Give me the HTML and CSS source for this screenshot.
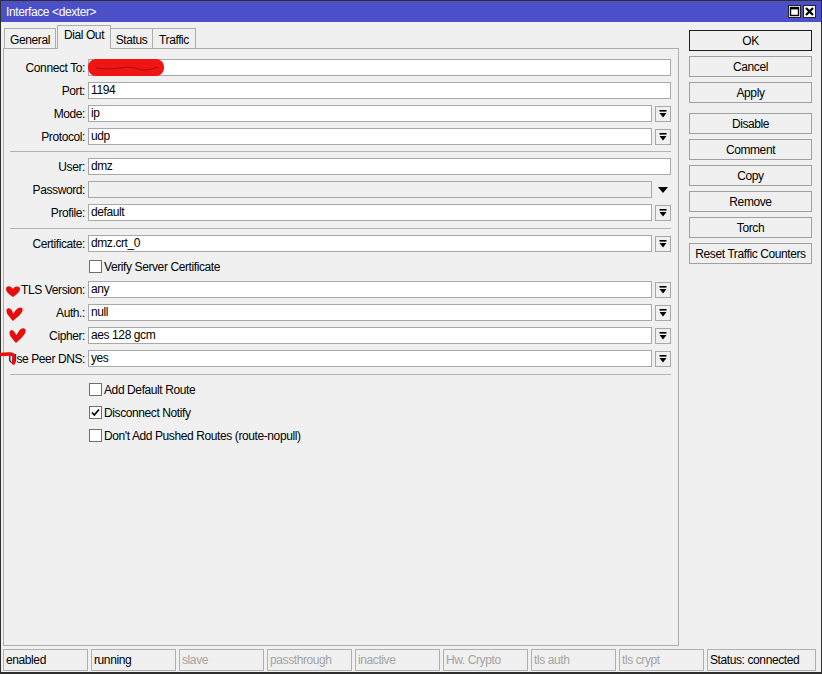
FILE: index.html
```html
<!DOCTYPE html>
<html lang="en">
<head>
    <meta charset="UTF-8">
    <title>Interface &lt;dexter&gt;</title>
    <link rel="stylesheet" href="styles.css">
</head>
<body>
    <div class="window">
        <div class="titlebar">
            <span class="title">Interface &lt;dexter&gt;</span>
            <div class="title-buttons">
                <span class="tbtn">
                    <svg width="11" height="11" viewBox="0 0 11 11"><rect x="1.5" y="1.5" width="8" height="8" fill="none" stroke="#000" stroke-width="1.4"/><rect x="1" y="1" width="9" height="2.4" fill="#000"/></svg>
                </span>
                <span class="tbtn">
                    <svg width="11" height="11" viewBox="0 0 11 11"><path d="M2 2 L9 9 M9 2 L2 9" stroke="#000" stroke-width="2.2"/></svg>
                </span>
            </div>
        </div>

        <div class="main">
            <div class="editor">
                <div class="tabs">
                    <div class="tab tab-general">General</div>
                    <div class="tab tab-active">Dial Out</div>
                    <div class="tab tab-status">Status</div>
                    <div class="tab tab-traffic">Traffic</div>
                </div>

                <div class="panel">
                    <div class="row">
                        <label>Connect To:</label>
                        <div class="field field-marked">
                            <span class="redact">
                                <svg width="76" height="17" viewBox="0 0 76 17"><path d="M8 9 Q20 11 32 9 T50 10 T70 8" fill="none" stroke="#8a1010" stroke-width="0.8"/></svg>
                            </span>
                        </div>
                    </div>
                    <div class="row">
                        <label>Port:</label>
                        <div class="field">1194</div>
                    </div>
                    <div class="row">
                        <label>Mode:</label>
                        <div class="field">ip</div>
                        <span class="drop"><svg width="8" height="8" viewBox="0 0 8 8"><rect x="0.5" y="0" width="7" height="1.6" fill="#000"/><polygon points="0.5,3 7.5,3 4,7.5" fill="#000"/></svg></span>
                    </div>
                    <div class="row">
                        <label>Protocol:</label>
                        <div class="field">udp</div>
                        <span class="drop"><svg width="8" height="8" viewBox="0 0 8 8"><rect x="0.5" y="0" width="7" height="1.6" fill="#000"/><polygon points="0.5,3 7.5,3 4,7.5" fill="#000"/></svg></span>
                    </div>

                    <div class="separator"></div>

                    <div class="row">
                        <label>User:</label>
                        <div class="field">dmz</div>
                    </div>
                    <div class="row">
                        <label>Password:</label>
                        <div class="field field-disabled"></div>
                        <span class="drop drop-plain"><svg width="10" height="6" viewBox="0 0 10 6"><polygon points="0,0 10,0 5,6" fill="#000"/></svg></span>
                    </div>
                    <div class="row">
                        <label>Profile:</label>
                        <div class="field">default</div>
                        <span class="drop"><svg width="8" height="8" viewBox="0 0 8 8"><rect x="0.5" y="0" width="7" height="1.6" fill="#000"/><polygon points="0.5,3 7.5,3 4,7.5" fill="#000"/></svg></span>
                    </div>

                    <div class="separator separator-low"></div>

                    <div class="row">
                        <label>Certificate:</label>
                        <div class="field">dmz.crt_0</div>
                        <span class="drop"><svg width="8" height="8" viewBox="0 0 8 8"><rect x="0.5" y="0" width="7" height="1.6" fill="#000"/><polygon points="0.5,3 7.5,3 4,7.5" fill="#000"/></svg></span>
                    </div>
                    <div class="row check-row">
                        <span class="checkbox"></span>
                        <span>Verify Server Certificate</span>
                    </div>
                    <div class="row">
                        <svg class="scribble scribble-tls" width="14" height="11" viewBox="0 0 14 11"><path d="M7 11 C3 8 0 6 0 3 C0 0.5 2.5 0 4 0.6 C5.5 1.2 6.5 2.2 7 3 C7.5 2 8.5 1 10 0.6 C11.5 0.2 14 0.6 14 3 C14 6 11 8 7 11Z" fill="#e80c0c"/></svg>
                        <label>TLS Version:</label>
                        <div class="field">any</div>
                        <span class="drop"><svg width="8" height="8" viewBox="0 0 8 8"><rect x="0.5" y="0" width="7" height="1.6" fill="#000"/><polygon points="0.5,3 7.5,3 4,7.5" fill="#000"/></svg></span>
                    </div>
                    <div class="row">
                        <svg class="scribble scribble-auth" width="17" height="14" viewBox="0 0 17 14"><path d="M7 14 C4 10 0 7 0.5 3 C1 0.5 4 0.5 5.5 3 C6.5 4.5 7 6 7.5 6.5 C9 4 11 1 14 0.5 C16.5 0.2 17.5 2.5 16 5 C14 8.5 10 11 7 14Z" fill="#e80c0c"/></svg>
                        <label>Auth.:</label>
                        <div class="field">null</div>
                        <span class="drop"><svg width="8" height="8" viewBox="0 0 8 8"><rect x="0.5" y="0" width="7" height="1.6" fill="#000"/><polygon points="0.5,3 7.5,3 4,7.5" fill="#000"/></svg></span>
                    </div>
                    <div class="row">
                        <svg class="scribble scribble-cipher" width="17" height="15" viewBox="0 0 17 15"><path d="M7 15 C4 11 0 8 0.5 4 C1 1.5 4 1.5 5.5 4 C6.5 5.5 7 6.5 7.5 7 C9 4.5 11 0.5 14 0.2 C16.5 0 17.5 2.5 16 5.5 C14 9 10 12 7 15Z" fill="#e80c0c"/></svg>
                        <label>Cipher:</label>
                        <div class="field">aes 128 gcm</div>
                        <span class="drop"><svg width="8" height="8" viewBox="0 0 8 8"><rect x="0.5" y="0" width="7" height="1.6" fill="#000"/><polygon points="0.5,3 7.5,3 4,7.5" fill="#000"/></svg></span>
                    </div>
                    <div class="row">
                        <svg class="scribble scribble-dns" width="18" height="14" viewBox="0 0 18 14"><path d="M0 3.5 L9 3 C12 2.8 14 3.5 14 6 L13.5 12" fill="none" stroke="#e80c0c" stroke-width="3.6" stroke-linecap="round"/></svg>
                        <label>Use Peer DNS:</label>
                        <div class="field">yes</div>
                        <span class="drop"><svg width="8" height="8" viewBox="0 0 8 8"><rect x="0.5" y="0" width="7" height="1.6" fill="#000"/><polygon points="0.5,3 7.5,3 4,7.5" fill="#000"/></svg></span>
                    </div>

                    <div class="separator separator-low"></div>

                    <div class="row check-row">
                        <span class="checkbox"></span>
                        <span>Add Default Route</span>
                    </div>
                    <div class="row check-row">
                        <span class="checkbox"><svg width="11" height="11" viewBox="0 0 11 11"><path d="M2 5.5 L4.3 8 L9 2.5" fill="none" stroke="#000" stroke-width="1.8"/></svg></span>
                        <span>Disconnect Notify</span>
                    </div>
                    <div class="row check-row">
                        <span class="checkbox"></span>
                        <span>Don't Add Pushed Routes (route-nopull)</span>
                    </div>
                </div>
            </div>

            <div class="actions">
                <button class="btn btn-default">OK</button>
                <button class="btn">Cancel</button>
                <button class="btn">Apply</button>
                <button class="btn btn-gap">Disable</button>
                <button class="btn">Comment</button>
                <button class="btn">Copy</button>
                <button class="btn">Remove</button>
                <button class="btn">Torch</button>
                <button class="btn">Reset Traffic Counters</button>
            </div>
        </div>

        <div class="statusbar">
            <div class="cell">enabled</div>
            <div class="cell">running</div>
            <div class="cell off">slave</div>
            <div class="cell off">passthrough</div>
            <div class="cell off">inactive</div>
            <div class="cell off">Hw. Crypto</div>
            <div class="cell off">tls auth</div>
            <div class="cell off">tls crypt</div>
            <div class="cell cell-wide">Status: connected</div>
        </div>
    </div>
</body>
</html>
```

FILE: styles.css
```css
* {
    box-sizing: border-box;
    margin: 0;
    padding: 0;
}

body {
    font-family: "Liberation Sans", Arial, sans-serif;
    font-size: 12px;
    letter-spacing: -0.4px;
    color: #000;
    background: #f0f0f0;
}

.window {
    width: 822px;
    height: 674px;
    border: 1px solid #2e2e2e;
    border-bottom-width: 2px;
    background: #f0f0f0;
    display: flex;
    flex-direction: column;
}

.titlebar {
    height: 21px;
    background: #4b50c8;
    color: #fff;
    display: flex;
    align-items: center;
    justify-content: space-between;
    padding: 0 5px 0 5px;
    flex-shrink: 0;
}

.title-buttons {
    display: flex;
    gap: 2px;
}

.tbtn {
    width: 13px;
    height: 13px;
    background: #fff;
    border: 1px solid #222;
    display: flex;
    align-items: center;
    justify-content: center;
}

.main {
    flex: 1;
    display: flex;
    min-height: 0;
}

.editor {
    width: 676px;
    margin-left: 2px;
    display: flex;
    flex-direction: column;
}

.tabs {
    height: 26px;
    display: flex;
    align-items: flex-end;
    padding-left: 1px;
    position: relative;
    z-index: 1;
}

.tab {
    height: 20px;
    border: 1px solid #adadad;
    border-bottom: none;
    background: #f0f0f0;
    display: flex;
    align-items: center;
    justify-content: center;
    padding-top: 2px;
}

.tab-general { width: 52px; }
.tab-status { width: 43px; margin-left: -1px; }
.tab-traffic { width: 44px; margin-left: -1px; }

.tab-active {
    width: 54px;
    height: 24px;
    margin-bottom: -1px;
    margin-left: 1px;
    padding-top: 0;
    padding-bottom: 5px;
    background: #f0f0f0;
}

.panel {
    flex: 1;
    border: 1px solid #adadad;
    margin-bottom: 1px;
    padding: 10px 7px 0 0;
    display: flex;
    flex-direction: column;
    gap: 6px;
}

.row {
    height: 17px;
    display: flex;
    align-items: center;
    position: relative;
}

.row label {
    width: 81px;
    margin-right: 3px;
    text-align: right;
    white-space: nowrap;
    flex-shrink: 0;
}

.field {
    flex: 1;
    height: 17px;
    background: #fff;
    border: 1px solid #a8a8a8;
    padding-left: 2px;
    line-height: 15px;
    position: relative;
}

.field-disabled {
    background: #f0f0f0;
}

.drop {
    width: 16px;
    height: 16px;
    margin-left: 3px;
    border: 1px solid #a8a8a8;
    background: #f0f0f0;
    display: flex;
    align-items: center;
    justify-content: center;
    flex-shrink: 0;
}

.drop-plain {
    border: none;
    background: none;
}

.separator {
    height: 1px;
    background: #b4b4b4;
    margin-left: 6px;
}

.separator-low {
    margin-top: 1px;
}

.check-row {
    padding-left: 85px;
}

.checkbox {
    width: 13px;
    height: 13px;
    border: 1px solid #6f6f6f;
    background: #fff;
    margin-right: 2px;
    display: flex;
    align-items: center;
    justify-content: center;
}

.redact {
    position: absolute;
    left: -1px;
    top: -1px;
    width: 76px;
    height: 17px;
    border-radius: 8px;
    background: #f01414;
    display: block;
}

.redact svg {
    display: block;
}

.scribble {
    position: absolute;
}

.scribble-tls { left: 2px; top: 5px; }
.scribble-auth { left: 2px; top: 3px; }
.scribble-cipher { left: 5px; top: 1px; }
.scribble-dns { left: -4px; top: 1px; }

.actions {
    width: 123px;
    margin-left: 10px;
    padding-top: 8px;
    display: flex;
    flex-direction: column;
    gap: 5px;
}

.btn {
    height: 21px;
    border: 1px solid #a0a0a0;
    background: #f0f0f0;
    font-family: inherit;
    font-size: 12px;
    letter-spacing: -0.4px;
    color: #000;
}

.btn-default {
    border-color: #1e1e1e;
}

.btn-gap {
    margin-top: 5px;
}

.statusbar {
    height: 22px;
    margin: 2px 0 1px 2px;
    display: flex;
    gap: 3px;
    flex-shrink: 0;
}

.cell {
    width: 85px;
    border: 1px solid #b0b0b0;
    padding-left: 2px;
    display: flex;
    align-items: center;
    white-space: nowrap;
    overflow: hidden;
}

.cell.off {
    color: #a3a3a3;
}

.cell-wide {
    width: 109px;
}
```
